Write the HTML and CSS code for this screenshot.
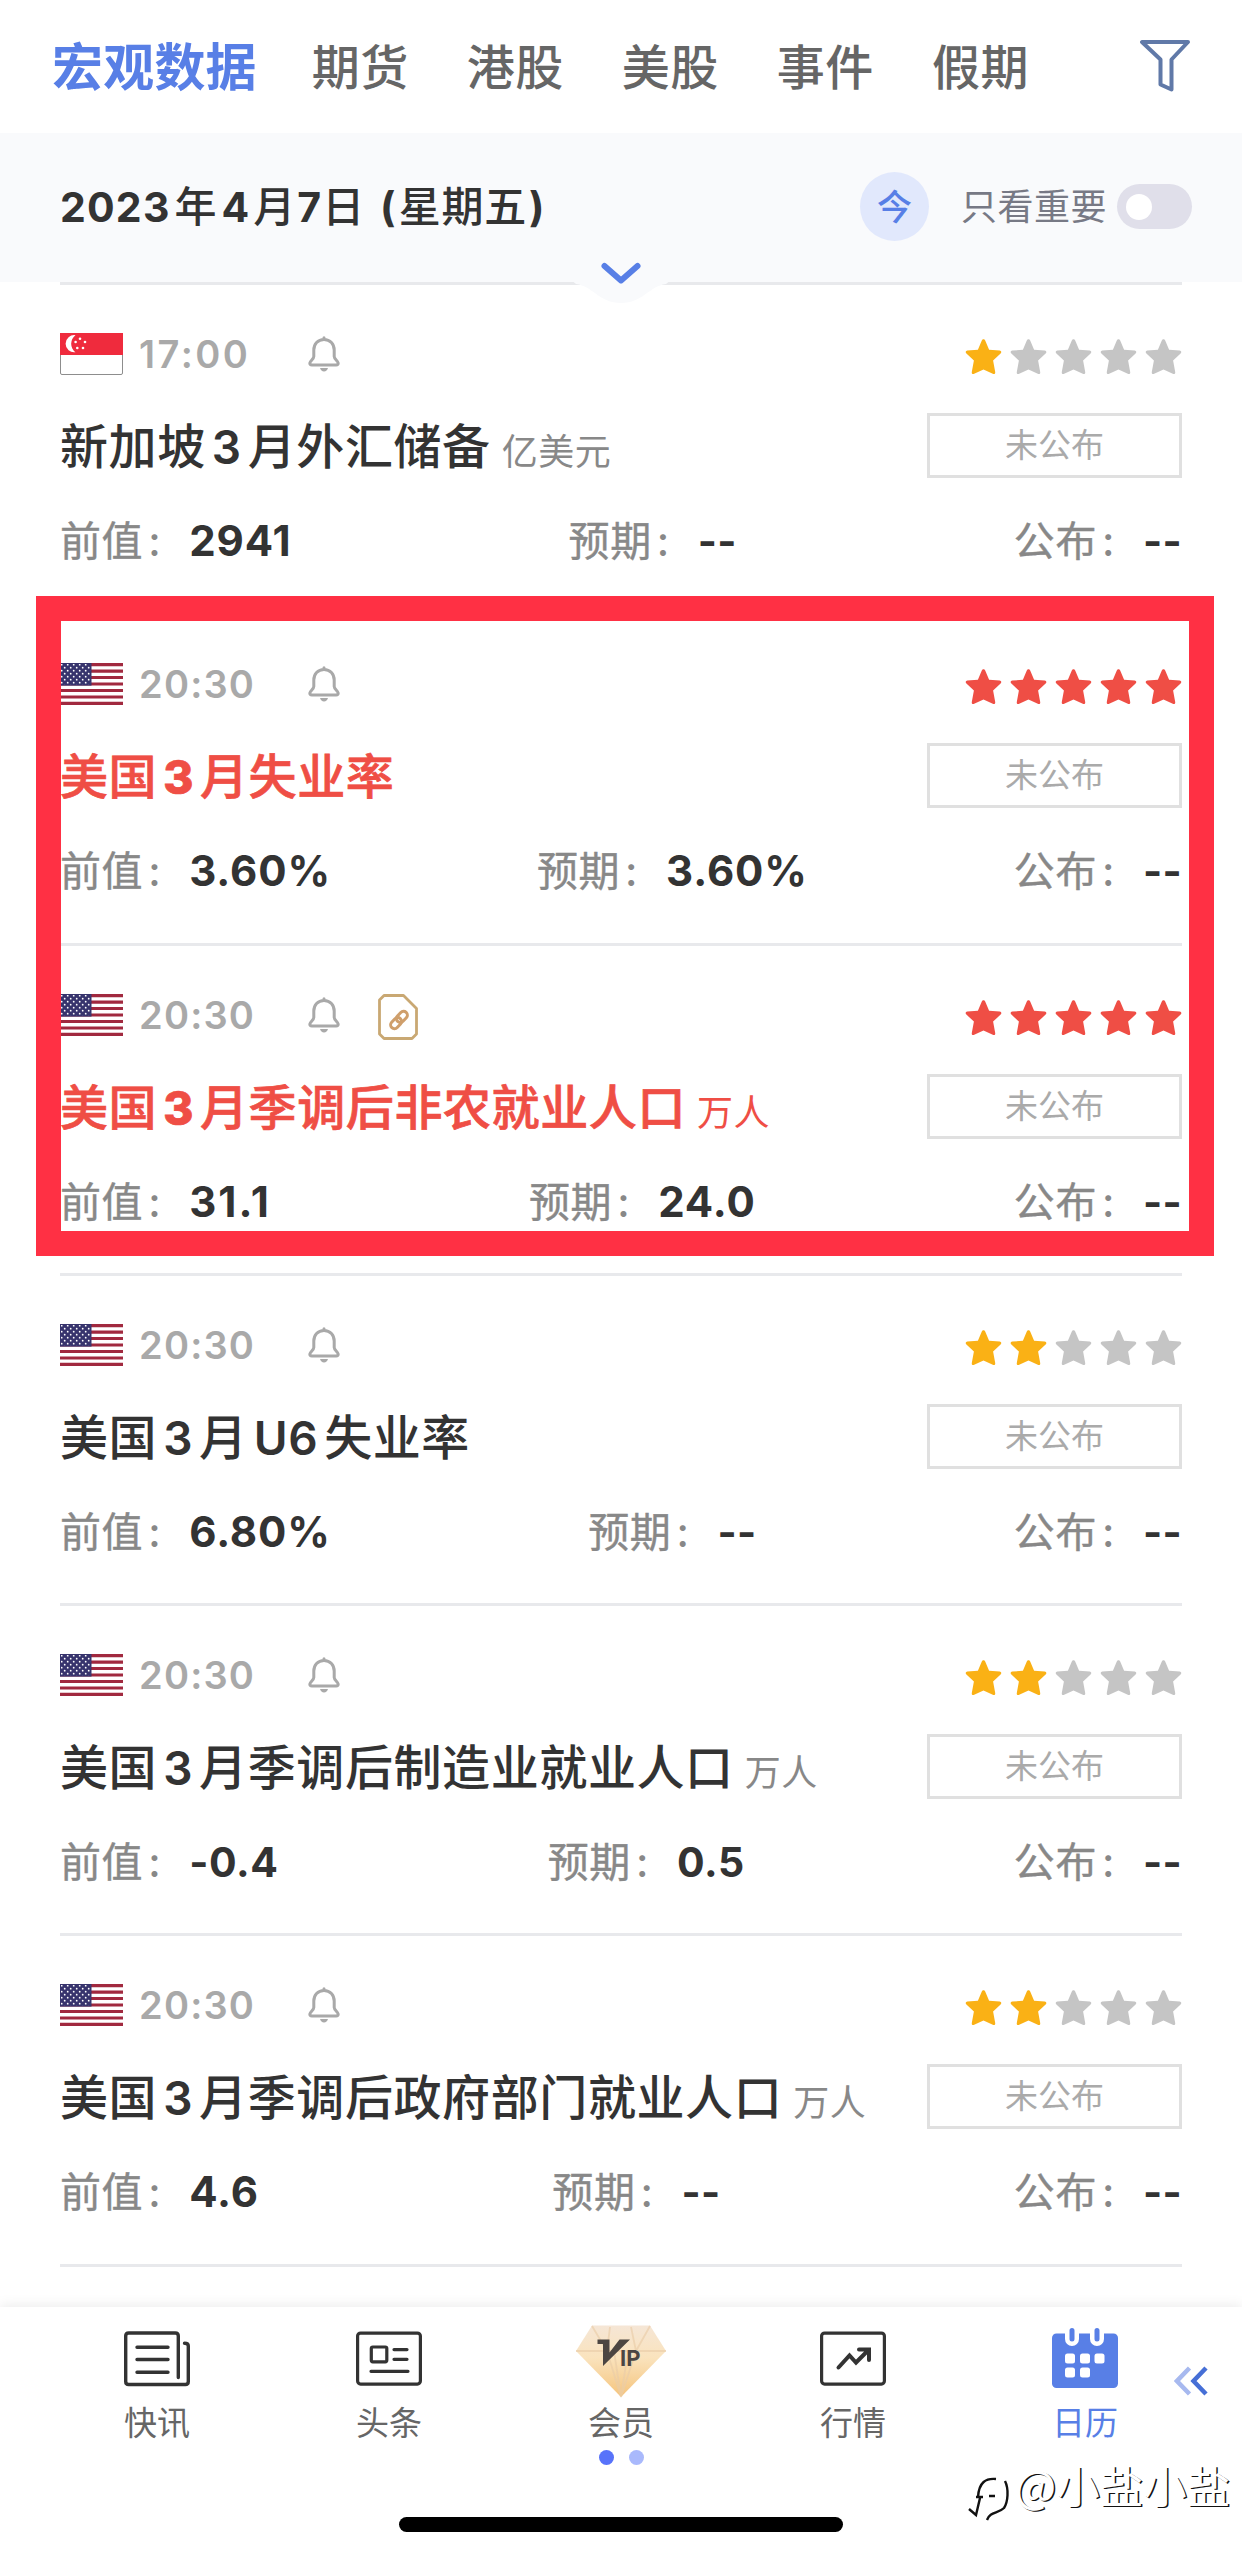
FILE: index.html
```html
<!DOCTYPE html>
<html lang="zh-CN">
<head>
<meta charset="utf-8">
<title>财经日历</title>
<link rel="stylesheet" href="styles.css">
</head>
<body>
<svg class="defs" aria-hidden="true">
  <symbol id="star" viewBox="0 0 37 37"><path d="M18.5 1.2c.7 0 1.3.5 1.7 1.4l3.9 9.2 10.6.8c1.8.2 2.1 1.9.9 3l-7.5 7 2.1 11.4c.3 1.8-.8 2.6-2.4 1.8l-9.3-4.4-9.3 4.4c-1.6.8-2.7 0-2.4-1.8l2.1-11.4-7.5-7c-1.2-1.1-.9-2.8.9-3l10.6-.8 3.9-9.2c.4-.9 1-1.4 1.7-1.4z"/></symbol>
  <symbol id="bell" viewBox="0 0 32 36"><path d="M16 1.800v1.700M16 3.400c-6.200 0-10.200 4.600-10.200 10.600v6.500c0 2.500-4 4.600-4 6.600 0 1.200.8 1.900 2 1.900h24.400c1.200 0 2-.7 2-1.900 0-2-4-4.100-4-6.600v-6.500c0-6-4-10.600-10.200-10.600z" fill="none" stroke="#a9a9a9" stroke-width="3" stroke-linecap="round"/><path d="M12 32h8c-.7 2.100-2 3.500-4 3.500s-3.300-1.400-4-3.500z" fill="#a9a9a9"/></symbol>
  <pattern id="dots" width="6" height="6" patternUnits="userSpaceOnUse"><circle cx="1.700" cy="1.700" r=".9" fill="#fff"/><circle cx="4.700" cy="4.700" r=".9" fill="#fff"/></pattern>
  <symbol id="us" viewBox="0 0 63 42"><path fill="#fff" d="M0 0h63v42H0z"/><path d="M0 1.600h63M0 8.100h63M0 14.500h63M0 21h63M0 27.500h63M0 34h63M0 40.400h63" stroke="#a1293f" stroke-width="3.200"/><path fill="#37346d" d="M0 0h31.500v22.600H0z"/><path fill="url(#dots)" d="M1 1h29.500v20.500H1z"/></symbol>
  <symbol id="sg" viewBox="0 0 63 42"><rect x=".5" y=".5" width="62" height="41" rx="1.500" fill="#fff" stroke="#8d8d8d"/><path d="M0 0h63v22H0z" fill="#ef2b3d"/><path d="M15.500 2.200a8.600 8.600 0 1 0 0 17 A10.500 10.500 0 0 1 15.500 2.200z" fill="#fff"/><g fill="#fff"><circle cx="20" cy="5.800" r="1.300"/><circle cx="15.600" cy="9" r="1.300"/><circle cx="25" cy="9" r="1.300"/><circle cx="17.300" cy="15" r="1.300"/><circle cx="23" cy="15" r="1.300"/></g></symbol>
</svg>
<div class="app">
  <nav class="tabs">
    <span class="tab active">宏观数据</span><span class="tab">期货</span><span class="tab">港股</span><span class="tab">美股</span><span class="tab">事件</span><span class="tab">假期</span>
    <svg class="filter" viewBox="0 0 50 52"><path d="M2 2h46L31.500 19.500V49.500L20.500 44.500V19.500z" fill="none" stroke="#6079a8" stroke-width="4" stroke-linejoin="round"/></svg>
  </nav>
  <header class="datebar">
    <div class="date"><b>2023</b>年<b class="mon">4</b>月<b class="day">7</b>日<b class="par">(</b>星期五<b class="par end">)</b></div>
    <span class="today">今</span>
    <span class="only">只看重要</span>
    <span class="toggle"></span>
    <svg class="pull" viewBox="0 0 100 44"><path d="M0 19L5 23C22 25 28 42 50 42S78 25 95 23L100 19V0H0z" fill="#f9fafc"/><path d="M33.500 5L50 19.500L66.500 5" fill="none" stroke="#587fe6" stroke-width="6" stroke-linecap="round" stroke-linejoin="round"/></svg>
  </header>
  <main class="list">
    <section class="row">
      <div class="head"><svg class="flag"><use href="#sg"/></svg><span class="time t17">17:00</span><svg class="bell"><use href="#bell"/></svg><div class="stars"><svg class="y"><use href="#star"/></svg><svg><use href="#star"/></svg><svg><use href="#star"/></svg><svg><use href="#star"/></svg><svg><use href="#star"/></svg></div></div>
      <div class="name"><h2>新加坡<b>3</b>月外汇储备</h2><small>亿美元</small><span class="status">未公布</span></div>
      <div class="vals"><p><span>前值</span><i>:</i><b>2941</b></p><p><span>预期</span><i>:</i><b class="nil">--</b></p><p><span>公布</span><i>:</i><b class="nil">--</b></p></div>
    </section>
    <section class="row hot">
      <div class="head"><svg class="flag"><use href="#us"/></svg><span class="time">20:30</span><svg class="bell"><use href="#bell"/></svg><div class="stars"><svg><use href="#star"/></svg><svg><use href="#star"/></svg><svg><use href="#star"/></svg><svg><use href="#star"/></svg><svg><use href="#star"/></svg></div></div>
      <div class="name"><h2>美国<b>3</b>月失业率</h2><span class="status">未公布</span></div>
      <div class="vals"><p><span>前值</span><i>:</i><b>3.60%</b></p><p><span>预期</span><i>:</i><b>3.60%</b></p><p><span>公布</span><i>:</i><b class="nil">--</b></p></div>
    </section>
    <section class="row hot">
      <div class="head"><svg class="flag"><use href="#us"/></svg><span class="time">20:30</span><svg class="bell"><use href="#bell"/></svg><svg class="link" viewBox="0 0 40 46"><path d="M6 1.500H25.500L38.500 14.500V40L34 44.500H6L1.500 40V6z" fill="none" stroke="#c9a873" stroke-width="2.800" stroke-linejoin="round"/><g transform="translate(21 26) rotate(-47)" fill="none" stroke="#cf9f6c" stroke-width="3"><rect x="-10.500" y="-3.800" width="12.500" height="7.600" rx="3.800"/><rect x="-2" y="-3.800" width="12.500" height="7.600" rx="3.800"/></g></svg><div class="stars"><svg><use href="#star"/></svg><svg><use href="#star"/></svg><svg><use href="#star"/></svg><svg><use href="#star"/></svg><svg><use href="#star"/></svg></div></div>
      <div class="name"><h2>美国<b>3</b>月季调后非农就业人口</h2><small>万人</small><span class="status">未公布</span></div>
      <div class="vals"><p><span>前值</span><i>:</i><b class="ones">31.1</b></p><p><span>预期</span><i>:</i><b>24.0</b></p><p><span>公布</span><i>:</i><b class="nil">--</b></p></div>
    </section>
    <section class="row">
      <div class="head"><svg class="flag"><use href="#us"/></svg><span class="time">20:30</span><svg class="bell"><use href="#bell"/></svg><div class="stars"><svg class="y"><use href="#star"/></svg><svg class="y"><use href="#star"/></svg><svg><use href="#star"/></svg><svg><use href="#star"/></svg><svg><use href="#star"/></svg></div></div>
      <div class="name"><h2>美国<b>3</b>月<b>U6</b>失业率</h2><span class="status">未公布</span></div>
      <div class="vals"><p><span>前值</span><i>:</i><b>6.80%</b></p><p><span>预期</span><i>:</i><b class="nil">--</b></p><p><span>公布</span><i>:</i><b class="nil">--</b></p></div>
    </section>
    <section class="row">
      <div class="head"><svg class="flag"><use href="#us"/></svg><span class="time">20:30</span><svg class="bell"><use href="#bell"/></svg><div class="stars"><svg class="y"><use href="#star"/></svg><svg class="y"><use href="#star"/></svg><svg><use href="#star"/></svg><svg><use href="#star"/></svg><svg><use href="#star"/></svg></div></div>
      <div class="name"><h2>美国<b>3</b>月季调后制造业就业人口</h2><small>万人</small><span class="status">未公布</span></div>
      <div class="vals"><p><span>前值</span><i>:</i><b class="short">-0.4</b></p><p><span>预期</span><i>:</i><b class="short">0.5</b></p><p><span>公布</span><i>:</i><b class="nil">--</b></p></div>
    </section>
    <section class="row">
      <div class="head"><svg class="flag"><use href="#us"/></svg><span class="time">20:30</span><svg class="bell"><use href="#bell"/></svg><div class="stars"><svg class="y"><use href="#star"/></svg><svg class="y"><use href="#star"/></svg><svg><use href="#star"/></svg><svg><use href="#star"/></svg><svg><use href="#star"/></svg></div></div>
      <div class="name"><h2>美国<b>3</b>月季调后政府部门就业人口</h2><small>万人</small><span class="status">未公布</span></div>
      <div class="vals"><p><span>前值</span><i>:</i><b>4.6</b></p><p><span>预期</span><i>:</i><b class="nil">--</b></p><p><span>公布</span><i>:</i><b class="nil">--</b></p></div>
    </section>
    <div class="row tail"></div>
    <div class="marker"></div>
  </main>
  <footer class="bottom">
    <div class="item"><svg viewBox="0 0 90 80"><g fill="none" stroke="#333" stroke-width="3.400" stroke-linecap="round"><path d="M66.300 53.500V12q0-3-3-3H16.700q-3 0-3 3v45.500q0 3 3 3H73.300q3 0 3-3V22q0-2.700-3.800-2.700"/><path d="M25 23.300h31M25 35.500h31M25 48.300h31"/></g></svg><span>快讯</span></div>
    <div class="item"><svg viewBox="0 0 90 80"><g fill="none" stroke="#333" stroke-width="3.200" stroke-linecap="round"><rect x="13.600" y="9.100" width="62.800" height="51" rx="3"/><rect x="27.300" y="23" width="15.500" height="14.800" rx="1.500"/><path d="M50 25.600h13M50 35.300h13M27 47.300h37"/></g></svg><span>头条</span></div>
    <div class="item"><svg viewBox="0 0 90 80"><defs><linearGradient id="gold" x2="0" y2="1"><stop stop-color="#f5e6d6"/><stop offset=".45" stop-color="#fae3bd"/><stop offset="1" stop-color="#f5c47c"/></linearGradient></defs><path d="M16 1.500H74L90 27L45 73L0 27z" fill="url(#gold)"/><path d="M16 2L31 27L45 73M34 3L31 27M55 3L60 27L45 73M74 2L60 27M0 27H90M38 27L45 73L52 27" fill="none" stroke="#e9cda7" stroke-width="1.800" opacity=".65"/><path d="M21.500 15.500h12v13L43.500 15.500H54L27 42V20h-5.500z" fill="#4c4642"/><text class="vip" x="44" y="42">IP</text></svg><span>会员</span></div>
    <div class="item"><svg viewBox="0 0 90 80"><rect x="13.600" y="9.100" width="62.800" height="51" rx="3" fill="none" stroke="#333" stroke-width="3.200"/><path d="M30.500 43.500L41.500 31.500L48 38.500L60 26.500M51 25.500H61V36" fill="none" stroke="#333" stroke-width="4" stroke-linecap="round"/></svg><span>行情</span></div>
    <div class="item on"><svg viewBox="0 0 90 80"><rect x="12" y="9.500" width="66" height="54.500" rx="4.500" fill="#587fe6"/><path d="M32 4V15M57 4V15" stroke="#fff" stroke-width="14" stroke-linecap="round"/><path d="M32 6.500V15M57 6.500V15" stroke="#587fe6" stroke-width="5" stroke-linecap="round"/><g fill="#fff"><rect x="25" y="29.500" width="10" height="10" rx="2.500"/><rect x="40" y="29.500" width="10" height="10" rx="2.500"/><rect x="54.500" y="29.500" width="10" height="10" rx="2.500"/><rect x="25" y="43.500" width="10" height="10" rx="2.500"/><rect x="40" y="43.500" width="10" height="10" rx="2.500"/></g></svg><span>日历</span></div>
    <div class="pager"><span></span><span></span></div>
    <svg class="more" viewBox="0 0 34 30"><path d="M15.500 2L3 15L15.500 28" fill="none" stroke="#a7b9ef" stroke-width="4.500"/><path d="M32 2L19.500 15L32 28" fill="none" stroke="#466fd6" stroke-width="4.500"/></svg>
    <div class="homebar"></div>
    <div class="mark"><svg viewBox="0 0 44 50"><path d="M10 24C11 9 18 5 28 6M8 24h7M12 25L8 42L1 36M21 23h6M37 8C41 16 40 29 36 35C30 41 22 38 19 47" fill="none" stroke="#111" stroke-width="2.400"/></svg><span>@小盐小盐</span></div>
  </footer>
</div>
</body>
</html>
```

FILE: styles.css
```css
* { box-sizing: border-box; margin: 0; padding: 0; }
body { width: 1242px; height: 2556px; overflow: hidden; background: #fff; font-family: "Noto Sans CJK SC", sans-serif; }
b { font-family: Inter, sans-serif; font-weight: 600; }
i { font-style: normal; font-family: Inter, sans-serif; }
.defs { position: absolute; width: 0; height: 0; }
.app { position: relative; height: 2556px; display: flex; flex-direction: column; }

.tabs { height: 133px; padding: 0 52px 4px; display: flex; align-items: center; gap: 58px; white-space: nowrap; }
.tab { font-size: 48px; line-height: 70px; padding-bottom: 2px; letter-spacing: .5px; font-weight: 500; color: #666; }
.tab.active { font-size: 51px; letter-spacing: .2px; font-weight: 700; color: #587fe6; margin-right: -3px; }
.filter { width: 50px; height: 52px; margin: 3px 0 0 auto; }

.datebar { position: relative; height: 149px; background: #f9fafc; padding: 0 50px 3px 60px; display: flex; align-items: center; }
.date { flex: 1; padding-bottom: 5px; font-size: 42px; font-weight: 500; color: #333; white-space: nowrap; letter-spacing: .8px; }
.date b { font-size: 41px; letter-spacing: 1.200px; font-weight: 650; }
.date b:first-child { margin-right: 4px; }
.date .mon { margin: 0 3px 0 4px; }
.date .day { margin: 0 0 0 1px; }
.date .par { margin: 0 2px 0 15px; }
.date .end { margin: 0 0 0 2px; }
.today { width: 69px; height: 69px; border-radius: 50%; background: #e1e8fc; color: #587fe6; font-size: 35px; line-height: 66px; font-weight: 500; text-align: center; }
.only { margin-left: 32px; padding-bottom: 4px; font-size: 36px; letter-spacing: .5px; color: #777985; }
.toggle { margin-left: 10px; width: 75px; height: 45px; border-radius: 23px; background: #e0dfea; padding: 10px 9px; }
.toggle::after { content: ""; display: block; width: 26px; height: 26px; border-radius: 50%; background: #fff; }
.pull { position: absolute; z-index: 2; left: 571px; top: 128px; width: 100px; height: 44px; }

.list { position: relative; height: 2025px; padding: 0 60px; }
.row { height: 330.300px; border-top: 3px solid #e8e9ec; padding-top: 48px; display: flex; flex-direction: column; gap: 38px; }
.row.tail { height: 3px; padding: 0; }
.head { height: 42px; display: flex; align-items: flex-start; }
.flag { width: 63px; height: 42px; }
.time { width: 185px; margin-left: 16px; font: 600 38px/42px Inter, sans-serif; letter-spacing: 1.200px; color: #a9a9a9; }
.t17 { letter-spacing: 2.500px; }
.bell { margin: 3px 0 0 -16px; width: 32px; height: 36px; }
.link { width: 40px; height: 46px; margin-left: 38px; }
.stars { margin: 5px 0 0 auto; display: flex; gap: 8px; fill: #c5c5c5; }
.stars svg { width: 37px; height: 37px; }
.stars .y { fill: #fab115; }
.hot .stars { fill: #ef4e45; }
.name { height: 65px; display: flex; align-items: center; white-space: nowrap; }
h2 { font-size: 48px; line-height: 65px; letter-spacing: .6px; font-weight: 500; color: #333; }
h2 b { margin: 0 6px; font-size: 46px; }
.hot h2, .hot small { color: #ef4e45; }
.hot h2 { -webkit-text-stroke: .7px #ef4e45; }
.hot h2 b { font-weight: 800; }
small { margin: 7px 0 0 11px; font-size: 36px; line-height: 56px; letter-spacing: .5px; color: #888; }
.status { margin-left: auto; width: 255px; height: 65px; border: 3px solid #e0e0e0; font-size: 33px; line-height: 55px; text-align: center; color: #aaa; }
.vals { height: 50px; display: flex; justify-content: space-between; font-size: 41px; line-height: 50px; letter-spacing: .6px; color: #888; white-space: nowrap; }
.vals p { display: flex; align-items: center; }
.vals span { padding-bottom: 6px; -webkit-text-stroke: .4px #888; }
.vals i { width: 46px; padding-left: 5px; font-weight: 500; }
.vals b { font-size: 42px; letter-spacing: .9px; font-weight: 650; color: #333; }
.vals .ones { letter-spacing: 2px; }
.vals .short { font-size: 41px; letter-spacing: .6px; }
.vals .nil { font-size: 41px; letter-spacing: .3px; font-weight: 700; }

.marker { position: absolute; z-index: 3; left: 36px; top: 314px; width: 1178px; height: 660px; border: 25px solid #ff3044; }

.bottom { position: relative; height: 249px; padding: 17px 41px 0; display: flex; background: #fff; box-shadow: 0 -2px 12px rgba(0, 0, 0, .08); z-index: 4; }
.item { width: 232px; display: flex; flex-direction: column; align-items: center; color: #666; font-size: 33px; line-height: 34px; font-weight: 400; }
.item svg { width: 90px; height: 80px; }
.item.on { color: #587fe6; }
.vip { font: 700 22px Inter, sans-serif; fill: #4c4642; }
.pager { position: absolute; left: 599px; top: 143px; display: flex; gap: 15px; }
.pager span { width: 15px; height: 15px; border-radius: 50%; background: #5873fa; }
.pager span + span { background: #a9b9fc; }
.more { position: absolute; left: 1174px; top: 59px; width: 34px; height: 30px; }
.homebar { position: absolute; left: 399px; top: 210px; width: 444px; height: 15px; border-radius: 8px; background: #000; }
.mark { position: absolute; left: 968px; top: 140px; display: flex; align-items: center; white-space: nowrap; }
.mark svg { width: 44px; height: 50px; margin-top: 26px; }
.mark span { margin-left: 3px; color: #fff; font-size: 43.500px; line-height: 60px; font-weight: 400; text-shadow: 1.500px 1px 0 #111; }
```
